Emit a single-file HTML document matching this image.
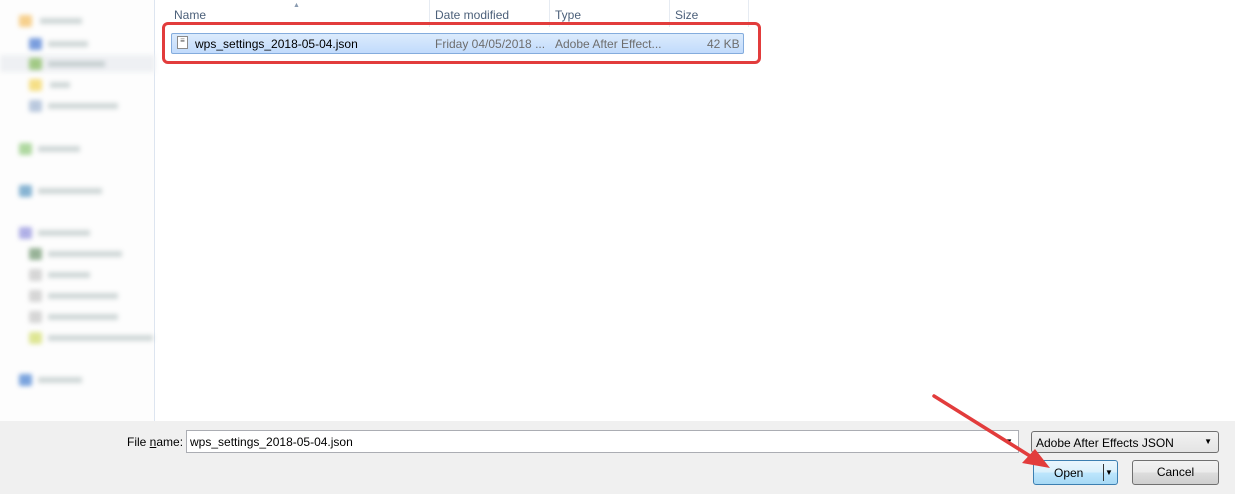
<!DOCTYPE html>
<html><head><meta charset="utf-8"><style>
*{margin:0;padding:0;box-sizing:border-box}
body{width:1235px;height:494px;overflow:hidden;background:#fff;font-family:"Liberation Sans",sans-serif;font-size:12px;color:#000;position:relative}
.abs{position:absolute}
.side{left:0;top:0;width:155px;height:421px;background:#fdfdfd;border-right:1px solid #dde5f0}
.bl{position:absolute;filter:blur(2.5px)}
.ic{position:absolute;width:13px;height:12px;border-radius:2px;filter:blur(2.5px);opacity:.8}
.tx{position:absolute;height:6px;background:#9aa;filter:blur(2.5px);opacity:.45}
.hdr{top:0;height:27px;color:#4c607a;font-size:12px}
.sep{position:absolute;top:0;height:27px;width:1px;background:#e6ebf2}
.bottom{left:0;top:421px;width:1235px;height:73px;background:#f0f0f0}
.btn{position:absolute;border:1px solid #707070;border-radius:3px;background:linear-gradient(#f2f2f2,#ebebeb 50%,#dddddd 51%,#cfcfcf);text-align:center;font-size:12px;line-height:22px}
</style></head><body>
<div class="abs side">
 <div class="bl" style="left:0;top:55px;width:155px;height:17px;background:#eef0f3"></div>
 <div class="ic" style="left:19px;top:15px;background:#f5c572"></div><div class="tx" style="left:40px;top:18px;width:42px"></div>
 <div class="ic" style="left:29px;top:38px;background:#5b87d6"></div><div class="tx" style="left:48px;top:41px;width:40px"></div>
 <div class="ic" style="left:29px;top:58px;background:#8fc06a"></div><div class="tx" style="left:48px;top:61px;width:57px"></div>
 <div class="ic" style="left:29px;top:79px;background:#f4d86a"></div><div class="tx" style="left:50px;top:82px;width:20px"></div>
 <div class="ic" style="left:29px;top:100px;background:#a9bcd6"></div><div class="tx" style="left:48px;top:103px;width:70px"></div>
 <div class="ic" style="left:19px;top:143px;background:#9ccf8a"></div><div class="tx" style="left:38px;top:146px;width:42px"></div>
 <div class="ic" style="left:19px;top:185px;background:#6aa2c8"></div><div class="tx" style="left:38px;top:188px;width:64px"></div>
 <div class="ic" style="left:19px;top:227px;background:#9c9ce0"></div><div class="tx" style="left:38px;top:230px;width:52px"></div>
 <div class="ic" style="left:29px;top:248px;background:#7fa07f"></div><div class="tx" style="left:48px;top:251px;width:74px"></div>
 <div class="ic" style="left:29px;top:269px;background:#ccc"></div><div class="tx" style="left:48px;top:272px;width:42px"></div>
 <div class="ic" style="left:29px;top:290px;background:#ccc"></div><div class="tx" style="left:48px;top:293px;width:70px"></div>
 <div class="ic" style="left:29px;top:311px;background:#ccc"></div><div class="tx" style="left:48px;top:314px;width:70px"></div>
 <div class="ic" style="left:29px;top:332px;background:#d6e07a"></div><div class="tx" style="left:48px;top:335px;width:105px"></div>
 <div class="ic" style="left:19px;top:374px;background:#5a8ed6"></div><div class="tx" style="left:38px;top:377px;width:44px"></div>
</div>
<div class="sep" style="left:429px"></div><div class="sep" style="left:549px"></div><div class="sep" style="left:669px"></div><div class="sep" style="left:748px"></div>
<div class="abs hdr" style="left:174px;top:8px">Name</div>
<div class="abs" style="left:293px;top:2px;font-size:7px;color:#8a9bb0">▲</div>
<div class="abs hdr" style="left:435px;top:8px">Date modified</div>
<div class="abs hdr" style="left:555px;top:8px">Type</div>
<div class="abs hdr" style="left:675px;top:8px">Size</div>
<div class="abs" style="left:171px;top:33px;width:573px;height:21px;border:1px solid #84acdd;border-radius:2px;background:linear-gradient(#dcebfc,#c1dbfc)"></div>
<div class="abs" style="left:177px;top:36px;width:11px;height:13px;border:1px solid #8a8a8a;background:#fff;font-size:8px;line-height:8px;text-align:center;color:#555">≡</div>
<div class="abs" style="left:195px;top:37px;font-size:12px">wps_settings_2018-05-04.json</div>
<div class="abs" style="left:435px;top:37px;color:#6d6d6d">Friday 04/05/2018 ...</div>
<div class="abs" style="left:555px;top:37px;color:#6d6d6d">Adobe After Effect...</div>
<div class="abs" style="left:707px;top:37px;color:#6d6d6d">42 KB</div>
<div class="abs" style="left:162px;top:22px;width:599px;height:42px;border:3px solid #e23c3c;border-radius:6px"></div>
<div class="abs bottom"></div>
<div class="abs" style="left:127px;top:435px">File <u>n</u>ame:</div>
<div class="abs" style="left:186px;top:430px;width:833px;height:23px;background:#fff;border:1px solid #abadb3;padding:4px 0 0 3px">wps_settings_2018-05-04.json</div>
<div class="abs" style="left:1005px;top:437px;font-size:8px">▼</div>
<div class="abs" style="left:1031px;top:431px;width:188px;height:22px;border:1px solid #707070;border-radius:3px;background:linear-gradient(#f2f2f2,#e4e4e4);padding:4px 0 0 4px">Adobe After Effects JSON<span style="position:absolute;right:6px;top:5px;font-size:8px">▼</span></div>
<div class="btn" style="left:1033px;top:460px;width:85px;height:25px;border-color:#3c7fb1;background:linear-gradient(#eaf6fd,#d9f0fc 50%,#bee6fd 51%,#a7d9f5)"><span style="position:absolute;left:20px;top:1px">Open</span><span style="position:absolute;left:69px;top:3px;width:1px;height:17px;background:#333"></span><span style="position:absolute;left:71px;top:1px;font-size:8px">▼</span></div>
<div class="btn" style="left:1132px;top:460px;width:87px;height:25px">Cancel</div>
<svg class="abs" style="left:0;top:0" width="1235" height="494"><line x1="934" y1="396" x2="1038" y2="461" stroke="#e23c3c" stroke-width="3.5" stroke-linecap="round"/><polygon points="1050,468 1022,463 1035,449" fill="#e23c3c"/></svg>
</body></html>
